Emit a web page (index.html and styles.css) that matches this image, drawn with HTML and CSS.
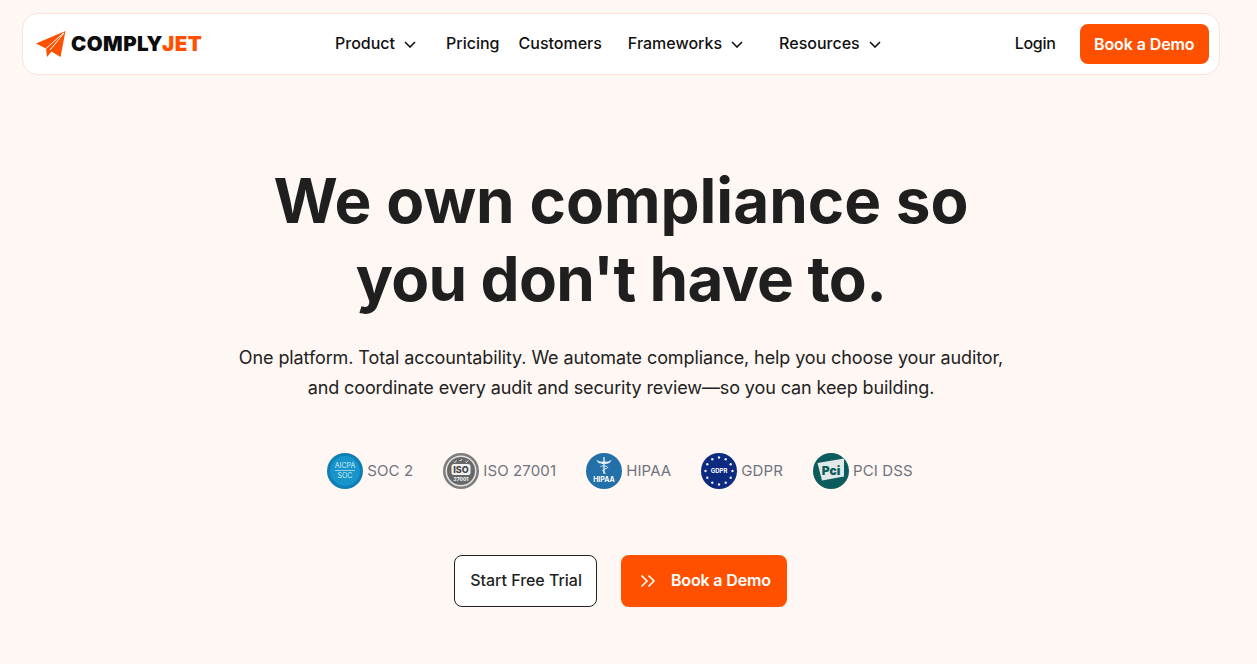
FILE: index.html
```html
<!DOCTYPE html>
<html lang="en">
<head>
<meta charset="utf-8">
<title>ComplyJet</title>
<link rel="stylesheet" href="styles.css">
</head>
<body>
<div class="page">
  <header class="nav">
    <a class="logo" href="#">
      <svg class="plane" width="30" height="27" viewBox="0 0 30 27">
        <path fill="#ff5000" d="M0 12.5 29.5 0 24.5 26 15.5 20.5 11 26 10 17.5Z"/>
        <path fill="none" stroke="#fff" stroke-width="1" d="M10 17.5 27.500 2M14 19 28 2"/>
      </svg>
      <span class="wordmark">COMPLY<span class="jet">JET</span></span>
    </a>
    <nav class="menu">
      <a class="item product" href="#">Product<svg class="chev" viewBox="0 0 12 7"><path d="M1 1l5 5 5-5"/></svg></a>
      <a class="item pricing" href="#">Pricing</a>
      <a class="item customers" href="#">Customers</a>
      <a class="item frameworks" href="#">Frameworks<svg class="chev" viewBox="0 0 12 7"><path d="M1 1l5 5 5-5"/></svg></a>
      <a class="item" href="#">Resources<svg class="chev" viewBox="0 0 12 7"><path d="M1 1l5 5 5-5"/></svg></a>
    </nav>
    <div class="actions">
      <a class="item login" href="#">Login</a>
      <a class="btn-nav" href="#">Book a Demo</a>
    </div>
  </header>

  <main class="hero">
    <h1>We own compliance so<br><span class="line-two">you don't have to.</span></h1>
    <p class="lead">One platform. Total accountability. We automate compliance, help you choose your auditor,<br>and coordinate every audit and security review—so you can keep building.</p>

    <ul class="badges">
      <li class="badge">
        <svg class="seal" viewBox="0 0 36 36">
          <circle cx="18" cy="18" r="18" fill="#0d7fb5"/>
          <circle cx="18" cy="18" r="15" fill="#1794c9"/>
          <text x="18" y="15" class="s-t aicpa">AICPA</text>
          <path d="M8 17.500h20" stroke="#cdeaf6" stroke-width=".7"/>
          <text x="18" y="25" class="s-t aicpa">SOC</text>
        </svg>
        <span class="badge-label">SOC 2</span>
      </li>
      <li class="badge">
        <svg class="seal" viewBox="0 0 36 36">
          <circle cx="18" cy="18" r="18" fill="#7d7d7d"/>
          <circle cx="18" cy="18" r="15.500" fill="#e4e4e4"/>
          <circle cx="18" cy="18" r="14" fill="#686868"/>
          <path d="M11 8.500l1 1 1.500-2M16.500 7l1 1 1.500-2M22.500 8.500l1 1 1.500-2" fill="none" stroke="#eee" stroke-width=".9"/>
          <rect x="8.500" y="11" width="19" height="11" rx="2.500" fill="#f2f2f2"/>
          <text x="18" y="20" class="s-t iso">ISO</text>
          <text x="18" y="28" class="s-t iso-n">27001</text>
        </svg>
        <span class="badge-label">ISO 27001</span>
      </li>
      <li class="badge">
        <svg class="seal" viewBox="0 0 36 36">
          <circle cx="18" cy="18" r="18" fill="#236fa8"/>
          <path d="M18 4v17" stroke="#e6f0f7" stroke-width="1.300"/>
          <path d="M10.500 6.500c3 3 5 2 7.500 2s4.500 1 7.500-2c-1 4-4 4.500-7.500 4.500s-6.500-.5-7.500-4.500Z" fill="#e6f0f7"/>
          <path d="M14.500 13.500c2-1 5.500-1 7 .5s-5.500 2-5 3.500 3 1.500 3 3" stroke="#e6f0f7" stroke-width=".9" fill="none"/>
          <text x="18" y="29" class="s-t hipaa">HIPAA</text>
        </svg>
        <span class="badge-label">HIPAA</span>
      </li>
      <li class="badge">
        <svg class="seal" viewBox="0 0 36 36">
          <circle cx="18" cy="18" r="18" fill="#0b2a80"/>
          <g fill="#e9edf7">
            <circle cx="18" cy="4.500" r="1.200"/><circle cx="24.700" cy="6.300" r="1.200"/><circle cx="29.700" cy="11.300" r="1.200"/>
            <circle cx="31.500" cy="18" r="1.200"/><circle cx="29.700" cy="24.700" r="1.200"/><circle cx="24.700" cy="29.700" r="1.200"/>
            <circle cx="18" cy="31.500" r="1.200"/><circle cx="11.300" cy="29.700" r="1.200"/><circle cx="6.300" cy="24.700" r="1.200"/>
            <circle cx="4.500" cy="18" r="1.200"/><circle cx="6.300" cy="11.300" r="1.200"/><circle cx="11.300" cy="6.300" r="1.200"/>
          </g>
          <text x="18" y="20.300" class="s-t gdpr">GDPR</text>
        </svg>
        <span class="badge-label">GDPR</span>
      </li>
      <li class="badge">
        <svg class="seal" viewBox="0 0 36 36">
          <circle cx="18" cy="18" r="18" fill="#0b5c5c"/>
          <path d="M4.500 10 31 5.500v18L9 27.500Z" fill="#dfe9e7"/>
          <text x="18" y="22" class="s-t pci">Pci</text>
        </svg>
        <span class="badge-label">PCI DSS</span>
      </li>
    </ul>

    <div class="cta">
      <a class="btn btn-ghost" href="#">Start Free Trial</a>
      <a class="btn btn-solid" href="#">
        <svg class="dbl" viewBox="0 0 16 14"><path d="M1.500 1.500 7 7l-5.500 5.500M8.500 1.500 14 7l-5.500 5.500"/></svg>
        Book a Demo
      </a>
    </div>
  </main>
</div>
</body>
</html>
```
FILE: styles.css
```css
* { box-sizing: border-box; }
html, body { margin: 0; height: 100%; }
body {
  background: #fff7f3;
  color: #1f1f1f;
  font-family: "Inter", "Liberation Sans", sans-serif;
  overflow: hidden;
}
a { color: inherit; text-decoration: none; }

.page {
  width: 1242px;
  padding: 13px 22px 0;
}

.nav {
  display: flex;
  align-items: center;
  height: 62px;
  padding: 0 10px 0 13px;
  background: #fff;
  border: 1px solid #fde3d7;
  border-radius: 16px;
}
.logo { display: flex; align-items: center; gap: 5px; width: 299px; flex: none; }
.wordmark {
  font: 900 20.500px/1 "Inter", sans-serif;
  letter-spacing: .45px;
  color: #0c0c0c;
}
.jet { color: #ff5000; }

.menu { display: flex; align-items: center; padding-bottom: 2px; }
.item {
  display: flex;
  align-items: center;
  font-size: 16px;
  font-weight: 500;
  color: #111;
}
.chev {
  width: 12px;
  height: 7px;
  margin-left: 9px;
  margin-top: 2px;
  fill: none;
  stroke: #111;
  stroke-width: 1.600;
}
.product { margin-right: 30px; }
.pricing { margin-right: 19px; }
.customers { margin-right: 26px; }
.frameworks { margin-right: 36px; }

.actions { display: flex; align-items: center; gap: 24px; margin-left: auto; }
.login { letter-spacing: -.3px; padding-bottom: 2px; }
.btn-nav {
  display: flex;
  align-items: center;
  height: 40px;
  padding: 0 14.500px 1px;
  background: #ff5000;
  color: #fff;
  border-radius: 8px;
  font-size: 16px;
  font-weight: 600;
  letter-spacing: -.1px;
}

.hero {
  display: flex;
  flex-direction: column;
  align-items: center;
  text-align: center;
}
h1 {
  margin: 87px 0 0;
  font-size: 62px;
  line-height: 78px;
  font-weight: 700;
  color: #1f1f1f;
}
.line-two { letter-spacing: -.65px; }
.lead {
  margin: 25px 0 0;
  font-size: 18px;
  line-height: 30px;
  letter-spacing: -.1px;
  color: #222;
}
.badges {
  display: flex;
  align-items: center;
  gap: 30px;
  margin: 50px 0 0;
  padding: 0 2px 0 0;
  list-style: none;
}
.badge {
  display: flex;
  align-items: center;
  gap: 4px;
  font-size: 15px;
  letter-spacing: .12px;
  color: #6f7380;
}
.badge-label { padding-bottom: 2px; }
.seal { width: 36px; height: 36px; flex: none; }
.s-t { text-anchor: middle; font-family: "Inter", sans-serif; fill: #fff; letter-spacing: 0; }
.aicpa { font-size: 7px; fill: #d8eff8; }
.iso { font-size: 9px; font-weight: 800; fill: #444; }
.iso-n { font-size: 5px; font-weight: 700; }
.hipaa { font-size: 7px; font-weight: 700; }
.gdpr { font-size: 6px; font-weight: 700; }
.pci { font-size: 12px; font-weight: 900; fill: #0b5c5c; }

.cta { display: flex; gap: 24px; margin-top: 66px; padding-right: 1px; }
.btn {
  display: flex;
  align-items: center;
  height: 52px;
  padding-bottom: 2px;
  border-radius: 8px;
  font-size: 16px;
  font-weight: 500;
}
.btn-ghost {
  padding-left: 15px;
  padding-right: 14.500px;
  letter-spacing: -.03px;
  background: #fff;
  border: 1px solid #222;
}
.btn-solid {
  gap: 15px;
  padding-left: 18.500px;
  padding-right: 16px;
  background: #ff5000;
  color: #fff;
  font-weight: 600;
  letter-spacing: -.15px;
}
.dbl {
  width: 16px;
  height: 14px;
  margin-top: 2px;
  fill: none;
  stroke: #fff;
  stroke-width: 1.600;
}
```
